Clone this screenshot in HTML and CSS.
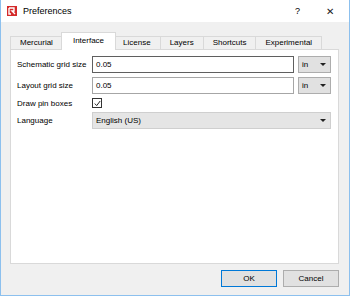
FILE: index.html
```html
<!doctype html>
<html lang="en">
<head>
    <meta charset="utf-8">
    <title>Preferences</title>
    <link rel="stylesheet" href="styles.css">
</head>
<body>
    <div class="window">
        <div class="titlebar">
            <svg class="logo" width="10" height="10" viewBox="0 0 10 10">
                <rect x="0" y="0" width="10" height="10" fill="#d42a2a"/>
                <path d="M2 2 H7 V5 H5 L8 8 M2 2 V8 H4" fill="none" stroke="#fff" stroke-width="1.4"/>
            </svg>
            <span class="title">Preferences</span>
            <span class="help">?</span>
            <span class="close">&#x2715;</span>
        </div>
        <div class="content">
            <div class="tabs">
                <div class="tab">Mercurial</div>
                <div class="tab active">Interface</div>
                <div class="tab">License</div>
                <div class="tab">Layers</div>
                <div class="tab">Shortcuts</div>
                <div class="tab">Experimental</div>
            </div>
            <div class="panel">
                <div class="form">
                    <label>Schematic grid size</label>
                    <div class="input focused">0.05</div>
                    <div class="combo">in<span class="arrow"></span></div>

                    <label>Layout grid size</label>
                    <div class="input">0.05</div>
                    <div class="combo">in<span class="arrow"></span></div>

                    <label>Draw pin boxes</label>
                    <div class="check-cell">
                        <span class="checkbox">
                            <svg width="7" height="7" viewBox="0 0 7 7"><path d="M0.8 3.6 L2.7 5.6 L6.2 1" fill="none" stroke="#222" stroke-width="1"/></svg>
                        </span>
                    </div>

                    <label>Language</label>
                    <div class="combo wide">English (US)<span class="arrow"></span></div>
                </div>
            </div>
            <div class="buttons">
                <button class="btn default">OK</button>
                <button class="btn">Cancel</button>
            </div>
        </div>
    </div>
</body>
</html>
```

FILE: styles.css
```css
* {
    box-sizing: border-box;
}
body {
    margin: 0;
    font-family: 'Liberation Sans', Arial, sans-serif;
    font-size: 8px;
    color: #000;
    background: #fff;
}
.window {
    width: 350px;
    height: 296px;
    border: 1px solid #8cc0ee;
    border-top: none;
    display: flex;
    flex-direction: column;
}
.titlebar {
    height: 22px;
    background: #fff;
    display: flex;
    align-items: center;
    padding: 0 0 0 6px;
}
.logo {
    margin-right: 6px;
}
.title {
    font-size: 9px;
    flex: 1;
}
.help {
    font-size: 9px;
    margin-right: 26px;
}
.close {
    font-size: 10px;
    font-weight: 300;
    color: #222;
    margin-right: 15px;
}
.content {
    flex: 1;
    background: #f0f0f0;
    padding: 10px 10px 8px 9px;
    display: flex;
    flex-direction: column;
}
.tabs {
    display: flex;
    align-items: flex-end;
    padding-left: 1px;
    height: 17px;
}
.tab {
    height: 13px;
    line-height: 12px;
    padding: 0 9px;
    border: 1px solid #d9d9d9;
    border-bottom: none;
    margin-left: -1px;
    background: #f0f0f0;
}
.tab.active {
    height: 18px;
    line-height: 16px;
    padding: 0 11px;
    margin: 0 -2px -1px -2px;
    background: #fff;
    position: relative;
    z-index: 1;
}
.panel {
    flex: 1;
    background: #fff;
    border: 1px solid #d9d9d9;
    padding: 6px 7px 6px 6px;
}
.form {
    display: grid;
    grid-template-columns: 71px 1fr 33px;
    column-gap: 4px;
    row-gap: 4px;
    align-items: center;
}
.input {
    height: 17px;
    line-height: 15px;
    border: 1px solid #a6a6a6;
    padding: 0 3px;
    background: #fff;
}
.input.focused {
    border-color: #5f5f5f;
}
.combo {
    height: 17px;
    line-height: 15px;
    border: 1px solid #adadad;
    background: #e1e1e1;
    padding: 0 3px;
    position: relative;
}
.combo.wide {
    grid-column: 2 / 4;
    background: #e5e5e5;
    border-color: #cfcfcf;
}
.arrow {
    position: absolute;
    right: 4px;
    top: 6px;
    border-left: 3px solid transparent;
    border-right: 3px solid transparent;
    border-top: 3px solid #222;
}
.check-cell {
    grid-column: 2 / 4;
    height: 10px;
    display: flex;
    align-items: center;
}
.checkbox {
    width: 10px;
    height: 10px;
    border: 1px solid #333;
    display: flex;
    align-items: center;
    justify-content: center;
    background: #fff;
}
.buttons {
    display: flex;
    justify-content: flex-end;
    gap: 6px;
    padding-top: 6px;
}
.btn {
    width: 56px;
    height: 17px;
    font-family: inherit;
    font-size: 8px;
    background: #e1e1e1;
    border: 1px solid #adadad;
    padding: 0;
}
.btn.default {
    border-color: #0078d7;
}
```
